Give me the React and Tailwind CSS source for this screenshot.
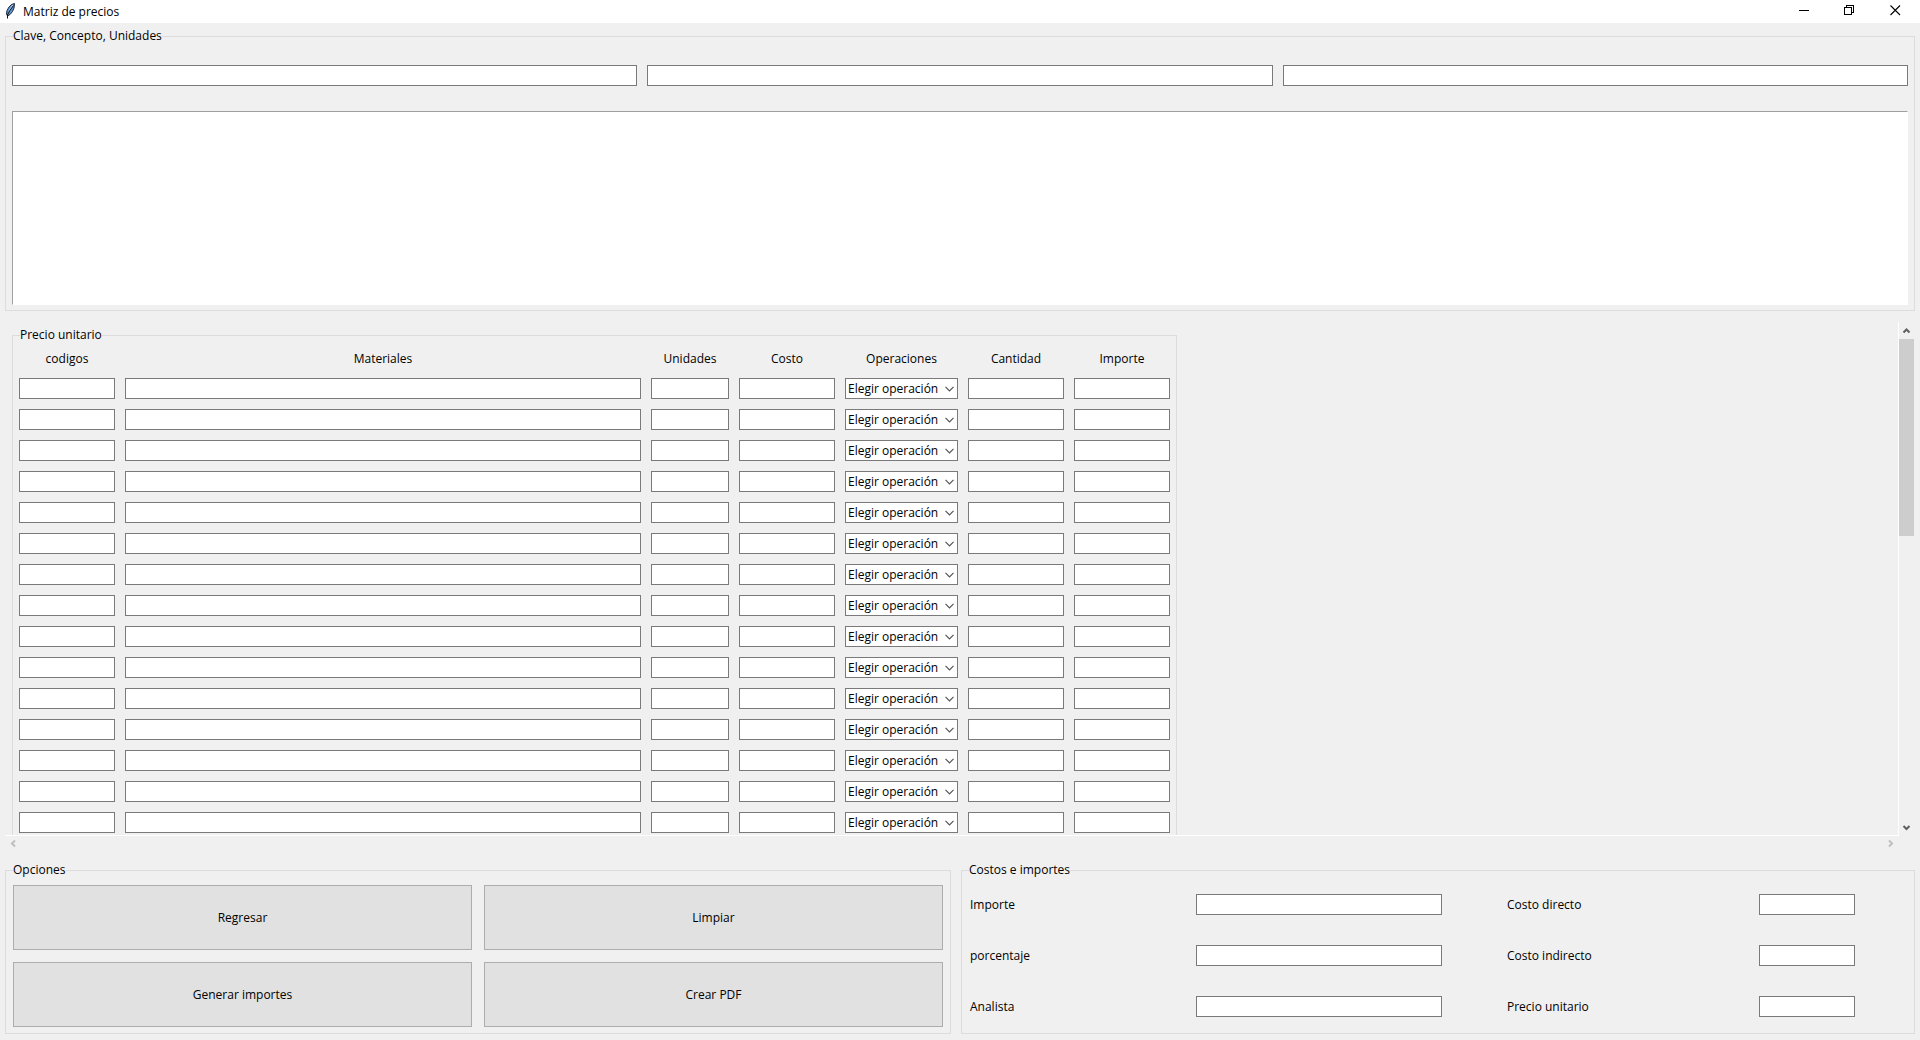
const COLUMNS = [
  { key: 'codigos', label: 'codigos', width: 'w-[106px]' },
  { key: 'materiales', label: 'Materiales', width: 'w-[526px]' },
  { key: 'unidades', label: 'Unidades', width: 'w-[88px]' },
  { key: 'costo', label: 'Costo', width: 'w-[106px]' },
  { key: 'operaciones', label: 'Operaciones', width: 'w-[123px]' },
  { key: 'cantidad', label: 'Cantidad', width: 'w-[106px]' },
  { key: 'importe', label: 'Importe', width: 'w-[96px]' },
];

const ROWS = Array.from({ length: 15 }, (_, i) => i + 1);

const COSTS = [
  ['Importe', 'Costo directo'],
  ['porcentaje', 'Costo indirecto'],
  ['Analista', 'Precio unitario'],
];

function Entry({ className = 'w-full', ...props }) {
  return (
    <input
      type="text"
      className={`block h-[21px] min-w-0 border border-[#7a7a7a] bg-white px-[3px] outline-none focus:border-[#0078d7] ${className}`}
      {...props}
    />
  );
}

function Group({ title, className = '', bodyClassName = '', children }) {
  return (
    <fieldset className={`min-w-0 border border-[#dcdcdc] ${className}`}>
      <legend className="ml-[7px] h-[18px] leading-[18px]">{title}</legend>
      <div className={bodyClassName}>{children}</div>
    </fieldset>
  );
}

function FeatherIcon() {
  return (
    <svg width="11" height="16" viewBox="0 0 11 16" aria-hidden="true">
      <path d="M9.5 0.5 6.5 1.5 4 4 2 7.5 1.5 11 2.5 13 5 11.5 7.5 8.5 9 5Z" fill="#5b94d6" stroke="#1d2b3a" strokeWidth="1" />
      <path d="M8 2 5 6 3.5 9.500" fill="none" stroke="#b9d6f5" strokeWidth="1" />
      <path d="M8.500 2.500 4.500 8 2.500 12 2.500 15.500" fill="none" stroke="#111" strokeWidth="1" />
    </svg>
  );
}

function TitleBar() {
  return (
    <header className="flex h-[23px] shrink-0 items-start bg-white pl-[5px]">
      <div className="pt-[3px]"><FeatherIcon /></div>
      <h1 className="grow pl-[7px] pt-[3px] leading-[18px]">Matriz de precios</h1>
      <button type="button" aria-label="Minimizar" className="flex h-[21px] w-[46px] items-center justify-center">
        <svg width="10" height="11" shapeRendering="crispEdges" aria-hidden="true"><path d="M0 5.500H10" stroke="#000" /></svg>
      </button>
      <button type="button" aria-label="Restaurar" className="flex h-[20px] w-[44px] items-center justify-center">
        <svg width="10" height="10" fill="none" stroke="#000" shapeRendering="crispEdges" aria-hidden="true">
          <path d="M.5 2.500h7v7h-7zM2.500 2.500v-2h7v7h-2" />
        </svg>
      </button>
      <button type="button" aria-label="Cerrar" className="flex h-[21px] w-[49px] items-center justify-center">
        <svg width="11" height="11" stroke="#000" strokeWidth="1.100" aria-hidden="true"><path d="M.5.5l9.500 9.500M10 .5l-9.500 9.500" /></svg>
      </button>
    </header>
  );
}

const CHEVRONS = {
  up: 'M1.500 6.500 4.500 3.500 7.500 6.500',
  down: 'M1.500 3 4.500 6 7.500 3',
  left: 'M6 1.500 3 4.500 6 7.500',
  right: 'M3 1.500 6 4.500 3 7.500',
};

function ScrollArrow({ dir, label, className }) {
  return (
    <button type="button" aria-label={label} className={`flex shrink-0 items-center justify-center ${className}`}>
      <svg width="9" height="9" fill="none" stroke="currentColor" strokeWidth="2" aria-hidden="true">
        <path d={CHEVRONS[dir]} />
      </svg>
    </button>
  );
}

function OperationSelect({ row }) {
  return (
    <div className="relative">
      <select
        aria-label={`Operaciones ${row}`}
        className="block h-[21px] w-full appearance-none border border-[#7a7a7a] bg-white pl-[2px] pr-[18px] leading-[18px] outline-none"
      >
        <option>Elegir operación</option>
      </select>
      <svg width="9" height="6" fill="none" stroke="#555" className="pointer-events-none absolute right-[4px] top-[8px]" aria-hidden="true">
        <path d="M.5.8 4.500 4.800 8.500.8" strokeWidth="1.200" />
      </svg>
    </div>
  );
}

function PriceTable() {
  return (
    <table className="table-fixed border-collapse">
      <thead>
        <tr className="h-[34px]">
          {COLUMNS.map((c) => (
            <th key={c.key} scope="col" className={`${c.width} pb-[4px] pr-[10px] align-middle font-normal last:pr-0`}>
              {c.label}
            </th>
          ))}
        </tr>
      </thead>
      <tbody>
        {ROWS.map((row) => (
          <tr key={row} className="h-[31px]">
            {COLUMNS.map((c) => (
              <td key={c.key} className="p-0 pr-[10px] align-top last:pr-0">
                {c.key === 'operaciones' ? <OperationSelect row={row} /> : <Entry aria-label={`${c.label} ${row}`} />}
              </td>
            ))}
          </tr>
        ))}
      </tbody>
    </table>
  );
}

function PriceArea() {
  return (
    <section className="mt-[11px] flex min-h-0 flex-1 flex-col" aria-label="Precio unitario">
      <div className="flex min-h-0 flex-1">
        <div className="min-w-0 flex-1 overflow-hidden border-b border-r border-white pl-[7px] pt-[4px]">
          <Group title="Precio unitario" className="w-fit border-b-0" bodyClassName="px-[6px]">
            <PriceTable />
          </Group>
        </div>
        <div className="flex w-[16px] flex-col pr-px text-[#606060]">
          <ScrollArrow dir="up" label="Subir" className="h-[17px]" />
          <div className="min-h-0 flex-1">
            <div className="h-[41%] bg-[#cdcdcd]" />
          </div>
          <ScrollArrow dir="down" label="Bajar" className="h-[17px]" />
        </div>
      </div>
      <div className="mr-[16px] flex h-[15px] shrink-0 justify-between text-[#bfbfbf]">
        <ScrollArrow dir="left" label="Izquierda" className="w-[17px]" />
        <ScrollArrow dir="right" label="Derecha" className="w-[17px]" />
      </div>
    </section>
  );
}

export default function App() {
  return (
    <div className="flex h-screen flex-col bg-[#f0f0f0] font-['Open_Sans','Noto_Sans',sans-serif] text-[12px] text-black">
      <TitleBar />
      <main className="flex min-h-0 flex-1 flex-col px-[5px] pb-[6px] pt-[4px]">
        <Group title="Clave, Concepto, Unidades" bodyClassName="px-[6px] pb-[5px]">
          <div className="grid grid-cols-3 gap-[10px] pt-[20px]">
            <Entry aria-label="Clave" />
            <Entry aria-label="Concepto" />
            <Entry aria-label="Unidades" />
          </div>
          <textarea
            aria-label="Descripción"
            className="mt-[25px] block h-[194px] w-full resize-none border border-b-white border-l-[#a0a0a0] border-r-white border-t-[#a0a0a0] bg-white px-[3px] outline-none"
          />
        </Group>

        <PriceArea />

        <div className="mt-[10px] grid shrink-0 grid-cols-[946fr_954fr] gap-[10px]">
          <Group title="Opciones" bodyClassName="px-[7px] pb-[6px]">
            <div className="grid grid-cols-2 gap-[12px] pt-[6px]">
              {['Regresar', 'Limpiar', 'Generar importes', 'Crear PDF'].map((name) => (
                <button key={name} type="button" className="h-[65px] border border-[#adadad] bg-[#e1e1e1] hover:border-[#0078d7] hover:bg-[#e5f1fb]">
                  {name}
                </button>
              ))}
            </div>
          </Group>
          <Group title="Costos e importes" bodyClassName="pl-[8px] pr-[7px]">
            <div className="grid grid-cols-[226fr_311fr_252fr_148fr] gap-y-[30px] pt-[15px]">
              {COSTS.flat().map((name, i) => [
                <label key={`l${name}`} htmlFor={`costo-${i}`} className="leading-[21px]">{name}</label>,
                <Entry key={`i${name}`} id={`costo-${i}`} className={i % 2 ? 'w-[96px]' : 'w-[246px]'} />,
              ])}
            </div>
          </Group>
        </div>
      </main>
    </div>
  );
}
